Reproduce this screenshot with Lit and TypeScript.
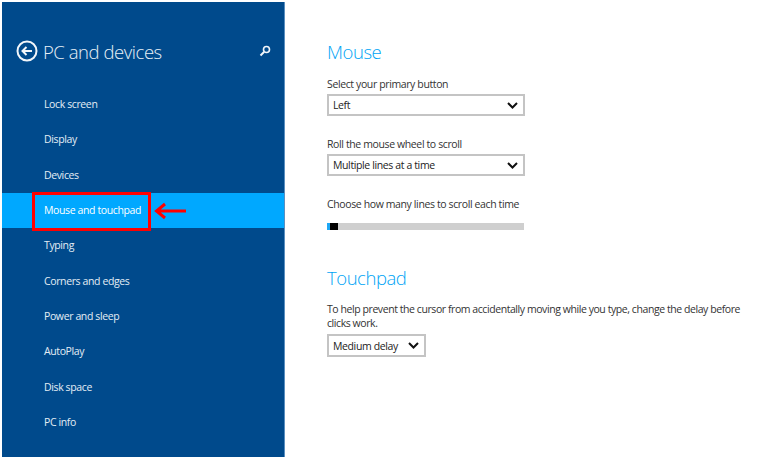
import { LitElement, css, html } from 'lit'
import { customElement } from 'lit/decorators.js'

const NAV = ['Lock screen', 'Display', 'Devices', 'Mouse and touchpad', 'Typing', 'Corners and edges', 'Power and sleep', 'AutoPlay', 'Disk space', 'PC info']
const SELECTED = 'Mouse and touchpad'

@customElement('app-root')
export class AppRoot extends LitElement {
  static styles = css`
    :host {
      display: block;
      width: 774px;
      height: 459px;
      overflow: hidden;
      background: #fff;
      font-family: 'Open Sans', 'Noto Sans', sans-serif;
      font-size: 10.5px;
      letter-spacing: -0.38px;
      color: #333;
    }

    .page {
      display: flex;
      height: 455px;
      padding: 2px 0 2px 2px;
    }

    .side {
      width: 283px;
      flex: none;
      background: #004a8c;
      border-right: 1px solid #5a8fc0;
      box-sizing: border-box;
      color: #e4edf5;
    }

    .head {
      display: flex;
      align-items: center;
      height: 30px;
      margin-top: 34px;
      padding: 0 13px 0 14px;
    }

    .head h1 {
      margin: 0 0 0 5px;
      font-size: 18.5px;
      font-weight: 300;
      letter-spacing: -0.45px;
      flex: 1;
      color: #e8f0f7;
    }

    nav {
      margin-top: 21px;
    }

    .item {
      position: relative;
      height: 35.33px;
      line-height: 35.33px;
      padding-left: 42px;
    }

    .item.selected {
      background: #00a8ff;
      color: #fff;
    }

    .mark {
      position: absolute;
      left: 30px;
      top: -1px;
      width: 119px;
      height: 39px;
      border: 3px solid #f00;
      box-sizing: border-box;
    }

    .arrow {
      position: absolute;
      left: 151px;
      top: 9px;
    }

    main {
      margin-left: 42px;
      padding-top: 37px;
      width: 420px;
    }

    h2 {
      margin: 0;
      font-size: 18.5px;
      font-weight: 300;
      letter-spacing: -0.45px;
      line-height: 26px;
      color: #00a4f5;
    }

    .label {
      line-height: 15px;
    }

    .first {
      margin-top: 12px;
    }

    .gap {
      margin-top: 21px;
    }

    .select {
      display: flex;
      align-items: center;
      justify-content: space-between;
      box-sizing: border-box;
      width: 198px;
      height: 22px;
      margin-top: 2px;
      padding: 0 5px 0 4px;
      border: 2px solid #c4c4c4;
      background: #fff;
      color: #222;
    }

    .select.small {
      width: 99px;
      height: 23px;
      margin-top: 4px;
    }

    .slider {
      display: flex;
      width: 197px;
      height: 7px;
      margin-top: 11px;
      background: #cfcfcf;
    }

    .slider i {
      display: block;
      width: 3px;
      background: #1fa8f5;
    }

    .slider b {
      display: block;
      width: 8px;
      background: #000;
    }

    .touch {
      margin-top: 35px;
    }

    .desc {
      margin-top: 12px;
      line-height: 13.5px;
      letter-spacing: -0.43px;
    }
  `

  chevron () {
    return html`<svg width="11" height="7" viewBox="0 0 11 7"><path d="M1 1l4.500 4.500L10 1" fill="none" stroke="#111" stroke-width="2"/></svg>`
  }

  select (text: string, small = false) {
    return html`<div class="select ${small ? 'small' : ''}"><span>${text}</span>${this.chevron()}</div>`
  }

  render () {
    return html`
      <div class="page">
        <aside class="side">
          <div class="head">
            <svg width="22" height="22" viewBox="0 0 22 22">
              <circle cx="11" cy="11" r="9.500" fill="none" stroke="#f2f6fa" stroke-width="2"/>
              <path d="M16 11H7M10.500 7L6.500 11l4 4" fill="none" stroke="#f2f6fa" stroke-width="2"/>
            </svg>
            <h1>PC and devices</h1>
            <svg width="12" height="12" viewBox="0 0 12 12">
              <circle cx="7.500" cy="4.500" r="3" fill="none" stroke="#f2f6fa" stroke-width="1.600"/>
              <path d="M5 7l-3.500 3.500" stroke="#f2f6fa" stroke-width="2"/>
            </svg>
          </div>
          <nav>
            ${NAV.map(item => html`
              <div class="item ${item === SELECTED ? 'selected' : ''}">
                ${item}
                ${item === SELECTED ? html`
                  <div class="mark"></div>
                  <svg class="arrow" width="34" height="18" viewBox="0 0 34 18">
                    <path d="M33 9H4M12 2L3.500 9l8.500 7" fill="none" stroke="#f00" stroke-width="3"/>
                  </svg>
                ` : ''}
              </div>
            `)}
          </nav>
        </aside>
        <main>
          <h2>Mouse</h2>
          <div class="label first">Select your primary button</div>
          ${this.select('Left')}
          <div class="label gap">Roll the mouse wheel to scroll</div>
          ${this.select('Multiple lines at a time')}
          <div class="label gap">Choose how many lines to scroll each time</div>
          <div class="slider"><i></i><b></b></div>
          <h2 class="touch">Touchpad</h2>
          <div class="desc">To help prevent the cursor from accidentally moving while you type, change the delay before clicks work.</div>
          ${this.select('Medium delay', true)}
        </main>
      </div>
    `
  }
}
